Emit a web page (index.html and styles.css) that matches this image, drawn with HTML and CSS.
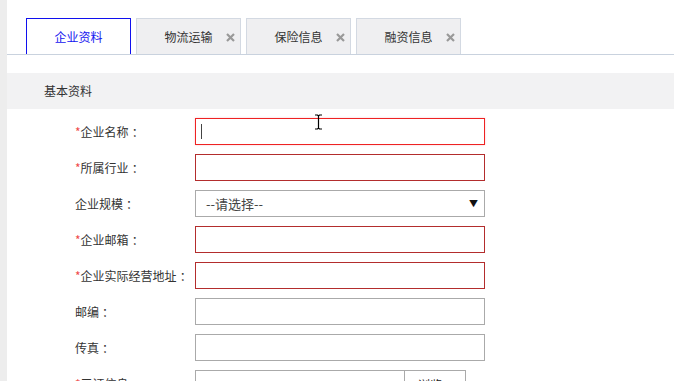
FILE: index.html
```html
<!DOCTYPE html>
<html lang="zh-CN">
<head>
  <meta charset="UTF-8" />
  <title>企业资料</title>
  <link rel="stylesheet" href="styles.css">
</head>
<body>

<div class="page">
  <div class="tabs">
    <div class="tab active">企业资料</div>
    <div class="tab">物流运输
      <svg class="close" width="9" height="9" viewBox="0 0 9 9"><path d="M1 1l7 7M8 1l-7 7" stroke="#999" stroke-width="2.2"/></svg>
    </div>
    <div class="tab">保险信息
      <svg class="close" width="9" height="9" viewBox="0 0 9 9"><path d="M1 1l7 7M8 1l-7 7" stroke="#999" stroke-width="2.2"/></svg>
    </div>
    <div class="tab">融资信息
      <svg class="close" width="9" height="9" viewBox="0 0 9 9"><path d="M1 1l7 7M8 1l-7 7" stroke="#999" stroke-width="2.2"/></svg>
    </div>
  </div>

  <div class="section-title">基本资料</div>

  <form class="form">
    <div class="row">
      <label class="label"><em>*</em>企业名称<span class="colon">：</span></label>
      <div class="field">
        <input type="text" class="input focus" />
        <span class="caret"></span>
        <svg class="ibeam" width="9" height="16" viewBox="0 0 9 16">
          <path d="M1 1h2.5l1 1 1-1H8M1 15h2.5l1-1 1 1H8M4.5 2v12" fill="none" stroke="#000" stroke-width="1.2"/>
        </svg>
      </div>
    </div>
    <div class="row">
      <label class="label"><em>*</em>所属行业<span class="colon">：</span></label>
      <input type="text" class="input required" />
    </div>
    <div class="row">
      <label class="label">企业规模<span class="colon">：</span></label>
      <div class="select">
        <span>--请选择--</span>
        <span class="arrow">&#9660;</span>
      </div>
    </div>
    <div class="row">
      <label class="label"><em>*</em>企业邮箱<span class="colon">：</span></label>
      <input type="text" class="input required" />
    </div>
    <div class="row">
      <label class="label"><em>*</em>企业实际经营地址<span class="colon">：</span></label>
      <input type="text" class="input required" />
    </div>
    <div class="row">
      <label class="label">邮编<span class="colon">：</span></label>
      <input type="text" class="input" />
    </div>
    <div class="row">
      <label class="label">传真<span class="colon">：</span></label>
      <input type="text" class="input" />
    </div>
    <div class="row">
      <label class="label"><em>*</em>三证信息<span class="colon">：</span></label>
      <div class="file">
        <div class="file-name"></div>
        <div class="file-btn">浏览...</div>
      </div>
    </div>
  </form>
</div>

</body>
</html>
```

FILE: styles.css
```css
html, body {
  margin: 0;
  padding: 0;
  height: 100%;
  overflow: hidden;
}

body {
  font-family: "Microsoft YaHei", "Noto Sans CJK SC", sans-serif;
  font-size: 12px;
  color: #333;
  background: #fff;
}

.page {
  border-left: 7px solid #ededed;
  min-height: 100%;
}

.tabs {
  display: flex;
  gap: 5px;
  padding: 18px 0 0 19px;
  border-bottom: 1px solid #c9d2de;
}

.tab {
  position: relative;
  width: 103px;
  height: 35px;
  line-height: 35px;
  text-align: center;
  background: #efeff1;
  border: 1px solid #d3d9e2;
  border-bottom: none;
  color: #333;
}

.tab.active {
  background: #fff;
  border-color: #1010ee;
  color: #1414f0;
}

.close {
  position: absolute;
  right: 5px;
  top: 14px;
}

.section-title {
  margin-top: 18px;
  height: 36px;
  line-height: 35px;
  padding-left: 37px;
  background: #f2f2f3;
  color: #333;
}

.form {
  display: flex;
  flex-direction: column;
  gap: 9px;
  padding: 9px 0 0 68px;
}

.row {
  display: flex;
  align-items: center;
  height: 27px;
}

.label {
  width: 120px;
  color: #333;
}

.label em {
  font-style: normal;
  color: #ef4a4a;
}

.colon {
  padding-left: 3px;
}

.field {
  position: relative;
}

.input {
  box-sizing: border-box;
  width: 290px;
  height: 27px;
  margin: 0;
  padding: 0 6px;
  border: 1px solid #aaa;
  background: #fff;
  outline: none;
  font: inherit;
}

.input.required {
  border-color: #b32d2d;
}

.input.focus {
  border-color: #ee2222;
  box-shadow: 0 0 2px #f9c9cf;
}

.caret {
  position: absolute;
  left: 6px;
  top: 6px;
  width: 1px;
  height: 15px;
  background: #444;
}

.ibeam {
  position: absolute;
  left: 119px;
  top: -4px;
}

.select {
  box-sizing: border-box;
  width: 290px;
  height: 27px;
  display: flex;
  justify-content: space-between;
  align-items: center;
  padding: 0 6px 0 10px;
  border: 1px solid #aaa;
  font-size: 13px;
  color: #444;
}

.select .arrow {
  font-size: 9px;
  color: #111;
}

.file {
  display: flex;
  height: 27px;
}

.file-name {
  box-sizing: border-box;
  width: 209px;
  border: 1px solid #aaa;
  border-right: none;
}

.file-btn {
  box-sizing: border-box;
  width: 62px;
  border: 1px solid #aaa;
  padding: 5px 0 0 13px;
  color: #222;
}
```
